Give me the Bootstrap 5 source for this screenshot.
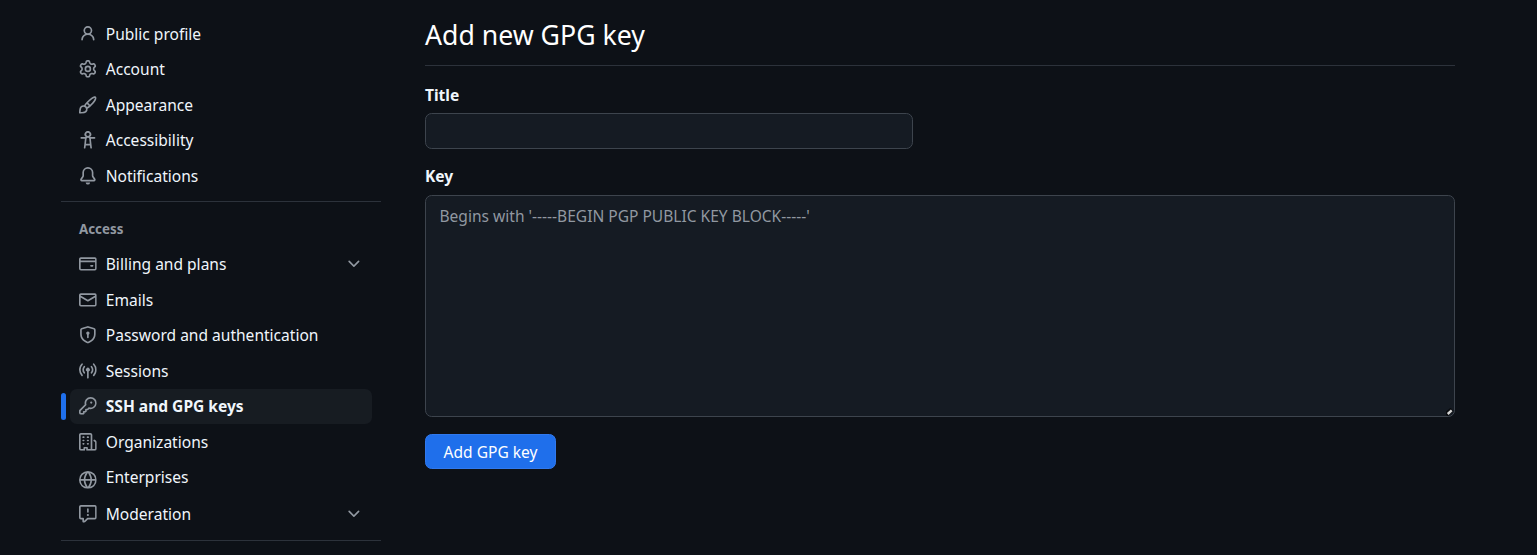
<!DOCTYPE html>
<html lang="en" data-bs-theme="dark">
<head>
<meta charset="utf-8">
<meta name="viewport" content="width=device-width, initial-scale=1">
<title>Add new GPG key</title>
<link href="https://cdn.jsdelivr.net/npm/bootstrap@5.3.0/dist/css/bootstrap.min.css" rel="stylesheet">
<style>
  body { background: #0d1117; color: #f0f6fc; font-family: "Noto Sans", sans-serif; font-size: 15.55px; line-height: 22px; height: 555px; overflow: hidden; }
  .side { width: 320px; margin-left: 61px; padding-top: 16px; }
  .side .nav-link { height: 35.5px; margin: 0 9px; padding: 0 9px; color: #f0f6fc; border-radius: 6.67px; position: relative; line-height: 22px; }
  .side .nav-link.active { background: #171c22; font-weight: 700; height: 35px; margin-bottom: .5px; }
  .side .nav-link.active::before { content: ""; position: absolute; left: -9px; top: 4px; width: 5px; height: 27px; border-radius: 5px; background: #1f6feb; }
  .oct { width: 17.77px; height: 17.77px; fill: #9198a1; flex: none; }
  .nav-link .lead-icon { margin-right: 9px; }
  .nav-link .chev { margin-left: auto; margin-right: .5px; }
  .lowered { margin-top: 5px; }
  .side .late { height: 36px; margin-top: .75px; }
  .rule { height: 1px; background: #2c323b; }
  .first-rule { margin-top: 7px; }
  .group-title { font-size: 13.33px; line-height: 20px; font-weight: 700; color: #9198a1; padding-left: 18px; margin: 17px 0 8px; }
  .form-area { width: 1030px; margin-left: 44px; padding-top: 17px; }
  .form-area h1 { font-size: 26.67px; font-weight: 400; line-height: 36px; margin: 0 0 12px; }
  .form-area .form-label { display: block; font-weight: 700; margin: 0; line-height: 22px; }
  .title-group { padding-top: 18px; }
  .title-group .form-label { padding-bottom: 7px; }
  .form-area .form-control { background: #151b23; border: 1px solid #3d444d; border-radius: 6.67px; color: #f0f6fc; font-size: 15.55px; line-height: 22px; }
  .form-area .form-control::placeholder { color: #9198a1; opacity: 1; }
  .title-input { width: 488px; height: 36px; }
  .key-input { height: 222px; padding: 9px 13.5px; resize: none; display: block; }
  .grip { position: absolute; right: 1px; bottom: 1px; width: 8px; height: 8px; }
  .btn-submit { height: 35px; width: 131px; margin-top: 17px; padding: 0; background: #1f6feb; border: 1px solid #3179ed; border-radius: 6.67px; color: #fff; font-size: 15.55px; line-height: 22px; }
</style>
</head>
<body>
<svg class="d-none" xmlns="http://www.w3.org/2000/svg">
  <symbol id="person" viewBox="0 0 16 16"><path d="M10.561 8.073a6.005 6.005 0 0 1 3.432 5.142.75.75 0 1 1-1.498.07 4.5 4.5 0 0 0-8.99 0 .75.75 0 0 1-1.498-.07 6.004 6.004 0 0 1 3.431-5.142 3.999 3.999 0 1 1 5.123 0ZM10.5 5a2.5 2.5 0 1 0-5 0 2.5 2.5 0 0 0 5 0Z"/></symbol>
  <symbol id="gear" viewBox="0 0 16 16"><path d="M8 0a8.2 8.2 0 0 1 .701.031C9.444.095 9.99.645 10.16 1.29l.288 1.107c.018.066.079.158.212.224.231.114.454.243.668.386.123.082.233.09.299.071l1.103-.303c.644-.176 1.392.021 1.82.63.27.385.506.792.704 1.218.315.675.111 1.422-.364 1.891l-.814.806c-.049.048-.098.147-.088.294.016.257.016.515 0 .772-.01.147.038.246.088.294l.814.806c.475.469.679 1.216.364 1.891a7.977 7.977 0 0 1-.704 1.217c-.428.61-1.176.807-1.82.63l-1.102-.302c-.067-.019-.177-.011-.3.071a5.909 5.909 0 0 1-.668.386c-.133.066-.194.158-.211.224l-.29 1.106c-.168.646-.715 1.196-1.458 1.26a8.006 8.006 0 0 1-1.402 0c-.743-.064-1.289-.614-1.458-1.26l-.289-1.106c-.018-.066-.079-.158-.212-.224a5.738 5.738 0 0 1-.668-.386c-.123-.082-.233-.09-.299-.071l-1.103.303c-.644.176-1.392-.021-1.82-.63a8.12 8.12 0 0 1-.704-1.218c-.315-.675-.111-1.422.363-1.891l.815-.806c.05-.048.098-.147.088-.294a6.214 6.214 0 0 1 0-.772c.01-.147-.038-.246-.088-.294l-.815-.806C.635 6.045.431 5.298.746 4.623a7.92 7.92 0 0 1 .704-1.217c.428-.61 1.176-.807 1.82-.63l1.102.302c.067.019.177.011.3-.071.214-.143.437-.272.668-.386.133-.066.194-.158.211-.224l.29-1.106C6.009.645 6.556.095 7.299.03 7.53.01 7.764 0 8 0Zm-.571 1.525c-.036.003-.108.036-.137.146l-.289 1.105c-.147.561-.549.967-.998 1.189-.173.086-.34.183-.5.29-.417.278-.97.423-1.529.27l-1.103-.303c-.109-.03-.175.016-.195.045-.22.312-.412.644-.573.99-.014.031-.021.11.059.19l.815.806c.411.406.562.957.53 1.456a4.709 4.709 0 0 0 0 .582c.032.499-.119 1.05-.53 1.456l-.815.806c-.081.08-.073.159-.059.19.162.346.353.677.573.989.02.03.085.076.195.046l1.102-.303c.56-.153 1.113-.008 1.53.27.161.107.328.204.501.29.447.222.85.629.997 1.189l.289 1.105c.029.109.101.143.137.146a6.6 6.6 0 0 0 1.142 0c.036-.003.108-.036.137-.146l.289-1.105c.147-.561.549-.967.998-1.189.173-.086.34-.183.5-.29.417-.278.97-.423 1.529-.27l1.103.303c.109.029.175-.016.195-.045.22-.313.411-.644.573-.99.014-.031.021-.11-.059-.19l-.815-.806c-.411-.406-.562-.957-.53-1.456a4.709 4.709 0 0 0 0-.582c-.032-.499.119-1.05.53-1.456l.815-.806c.081-.08.073-.159.059-.19a6.464 6.464 0 0 0-.573-.989c-.02-.03-.085-.076-.195-.046l-1.102.303c-.56.153-1.113.008-1.53-.27a4.44 4.44 0 0 0-.501-.29c-.447-.222-.85-.629-.997-1.189l-.289-1.105c-.029-.11-.101-.143-.137-.146a6.6 6.6 0 0 0-1.142 0ZM11 8a3 3 0 1 1-6 0 3 3 0 0 1 6 0ZM9.5 8a1.5 1.5 0 1 0-3.001.001A1.5 1.5 0 0 0 9.5 8Z"/></symbol>
  <symbol id="brush" viewBox="0 0 16 16"><path d="M11.134 1.535c.7-.509 1.416-.942 2.076-1.155.649-.21 1.463-.267 2.069.34.603.601.568 1.411.368 2.07-.202.668-.624 1.39-1.125 2.096-1.011 1.424-2.496 2.987-3.775 4.249-1.098 1.084-2.132 1.839-3.04 2.3a3.744 3.744 0 0 1-1.055 3.217c-.431.431-1.065.691-1.657.861-.614.177-1.294.287-1.914.357A21.151 21.151 0 0 1 .797 16H.743a.75.75 0 0 1-.743-.742v-.054a21.25 21.25 0 0 1 .13-2.284c.067-.647.187-1.287.358-1.914.17-.591.43-1.226.86-1.657a3.746 3.746 0 0 1 3.227-1.054c.466-.893 1.225-1.907 2.314-2.982 1.271-1.255 2.833-2.75 4.245-3.777ZM1.62 13.089c-.051.464-.086.929-.104 1.395.466-.018.932-.053 1.396-.104a10.511 10.511 0 0 0 1.668-.309c.526-.151.856-.325 1.011-.48a2.25 2.25 0 1 0-3.182-3.182c-.155.155-.329.485-.48 1.01a10.515 10.515 0 0 0-.309 1.67Zm10.396-10.34c-1.224.89-2.605 2.189-3.822 3.384l1.718 1.718c1.21-1.205 2.51-2.597 3.387-3.833.47-.662.78-1.227.912-1.662.134-.444.032-.551.009-.575h-.001V1.78c-.014-.014-.113-.113-.548.027-.432.14-.995.462-1.655.942Zm-4.832 7.266-.001.001a9.859 9.859 0 0 0 1.63-1.142L7.155 7.216a9.7 9.7 0 0 0-1.161 1.607c.482.302.889.71 1.19 1.192Z"/></symbol>
  <symbol id="a11y" viewBox="0 0 16 16"><path d="M9.923 5.302c.063.063.122.129.178.198H14A.75.75 0 0 1 14 7h-3.3l.578 5.163.362 2.997a.75.75 0 0 1-1.49.18L9.868 13H6.132l-.282 2.34a.75.75 0 0 1-1.49-.18l.362-2.997L5.3 7H2a.75.75 0 0 1 0-1.5h3.9a2.54 2.54 0 0 1 .176-.198 3 3 0 1 1 3.847 0ZM9.2 7.073h-.001a1.206 1.206 0 0 0-2.398 0L6.305 11.5h3.39ZM9.5 3a1.5 1.5 0 1 0-3.001.001A1.5 1.5 0 0 0 9.5 3Z"/></symbol>
  <symbol id="bell" viewBox="0 0 16 16"><path d="M8 16a2 2 0 0 0 1.985-1.75c.017-.137-.097-.25-.235-.25h-3.5c-.138 0-.252.113-.235.25A2 2 0 0 0 8 16ZM3 5a5 5 0 0 1 10 0v2.947c0 .05.015.098.042.139l1.703 2.555A1.519 1.519 0 0 1 13.482 13H2.518a1.516 1.516 0 0 1-1.263-2.36l1.703-2.554A.255.255 0 0 0 3 7.947Zm5-3.5A3.5 3.5 0 0 0 4.5 5v2.947c0 .346-.102.683-.294.97l-1.703 2.556a.017.017 0 0 0-.003.01l.001.006c0 .002.002.004.004.006l.006.004.007.001h10.964l.007-.001.006-.004.004-.006.001-.007a.017.017 0 0 0-.003-.01l-1.703-2.554a1.745 1.745 0 0 1-.294-.97V5A3.5 3.5 0 0 0 8 1.5Z"/></symbol>
  <symbol id="creditcard" viewBox="0 0 16 16"><path d="M10.75 9a.75.75 0 0 0 0 1.5h1.5a.75.75 0 0 0 0-1.5h-1.5ZM0 3.75C0 2.784.784 2 1.75 2h12.5c.966 0 1.75.784 1.75 1.75v8.5A1.75 1.75 0 0 1 14.25 14H1.75A1.75 1.75 0 0 1 0 12.25ZM14.5 6.5h-13v5.75c0 .138.112.25.25.25h12.5a.25.25 0 0 0 .25-.25Zm0-2.75a.25.25 0 0 0-.25-.25H1.75a.25.25 0 0 0-.25.25V5h13Z"/></symbol>
  <symbol id="mail" viewBox="0 0 16 16"><path d="M1.75 2h12.5c.966 0 1.75.784 1.75 1.75v8.5A1.75 1.75 0 0 1 14.25 14H1.75A1.75 1.75 0 0 1 0 12.25v-8.5C0 2.784.784 2 1.75 2ZM1.5 12.251c0 .138.112.25.25.25h12.5a.25.25 0 0 0 .25-.25V5.809L8.38 9.397a.75.75 0 0 1-.76 0L1.5 5.809v6.442Zm13-8.181v-.32a.25.25 0 0 0-.25-.25H1.75a.25.25 0 0 0-.25.25v.32L8 7.88Z"/></symbol>
  <symbol id="shield" viewBox="0 0 16 16"><path d="m8.533.133 5.25 1.68A1.75 1.75 0 0 1 15 3.48V7c0 1.566-.32 3.182-1.303 4.682-.983 1.498-2.585 2.813-5.032 3.855a1.697 1.697 0 0 1-1.33 0c-2.447-1.042-4.049-2.357-5.032-3.855C1.32 10.182 1 8.566 1 7V3.48a1.75 1.75 0 0 1 1.217-1.667l5.25-1.68a1.748 1.748 0 0 1 1.066 0Zm-.61 1.429.001.001-5.25 1.68a.251.251 0 0 0-.174.237V7c0 1.36.275 2.666 1.057 3.859.784 1.194 2.121 2.342 4.366 3.298a.196.196 0 0 0 .154 0c2.245-.957 3.582-2.103 4.366-3.297C13.225 9.666 13.5 8.358 13.5 7V3.48a.25.25 0 0 0-.174-.238l-5.25-1.68a.25.25 0 0 0-.153 0ZM9.5 6.5c0 .536-.286 1.032-.75 1.3v2.45a.75.75 0 0 1-1.5 0V7.8A1.5 1.5 0 1 1 9.5 6.5Z"/></symbol>
  <symbol id="broadcast" viewBox="0 0 16 16"><path d="M8.75 8.582v5.668a.75.75 0 0 1-1.5 0V8.582a1.75 1.75 0 1 1 1.5 0Zm3.983-7.125a.75.75 0 0 1 1.06.026A7.976 7.976 0 0 1 16 7c0 2.139-.84 4.083-2.207 5.517a.75.75 0 1 1-1.086-1.034A6.474 6.474 0 0 0 14.5 7a6.474 6.474 0 0 0-1.793-4.483.75.75 0 0 1 .026-1.06Zm-9.466 0c.3.286.312.76.026 1.06A6.474 6.474 0 0 0 1.5 7a6.47 6.47 0 0 0 1.793 4.483.75.75 0 0 1-1.086 1.034A7.973 7.973 0 0 1 0 7c0-2.139.84-4.083 2.207-5.517a.75.75 0 0 1 1.06-.026Zm8.556 2.321A4.988 4.988 0 0 1 13 7a4.988 4.988 0 0 1-1.177 3.222.75.75 0 1 1-1.146-.967A3.487 3.487 0 0 0 11.5 7c0-.86-.309-1.645-.823-2.255a.75.75 0 0 1 1.146-.967Zm-6.492.958A3.48 3.48 0 0 0 4.5 7a3.48 3.48 0 0 0 .823 2.255.75.75 0 0 1-1.146.967A4.981 4.981 0 0 1 3 7a4.982 4.982 0 0 1 1.188-3.236.75.75 0 1 1 1.143.972Z"/></symbol>
  <symbol id="keyicon" viewBox="0 0 16 16"><path d="M10.5 0a5.499 5.499 0 1 1-1.288 10.848l-.932.932a.749.749 0 0 1-.53.22H7v.75a.749.749 0 0 1-.22.53l-.5.5a.749.749 0 0 1-.53.22H5v.75a.749.749 0 0 1-.22.53l-.5.5a.749.749 0 0 1-.53.22h-2A1.75 1.75 0 0 1 0 14.25v-2c0-.199.079-.389.22-.53l4.932-4.932A5.5 5.5 0 0 1 10.5 0Zm-4 5.5c-.001.431.069.86.205 1.269a.75.75 0 0 1-.181.768L1.5 12.56v1.69c0 .138.112.25.25.25h1.69l.06-.06v-1.19a.75.75 0 0 1 .75-.75h1.19l.06-.06v-1.19a.75.75 0 0 1 .75-.75h1.19l1.023-1.025a.75.75 0 0 1 .768-.18A4 4 0 1 0 6.5 5.5ZM11 6a1 1 0 1 1 0-2 1 1 0 0 1 0 2Z"/></symbol>
  <symbol id="org" viewBox="0 0 16 16"><path d="M1.75 16A1.75 1.75 0 0 1 0 14.25V1.75C0 .784.784 0 1.75 0h8.5C11.216 0 12 .784 12 1.75v12.5c0 .085-.006.168-.018.25h2.268a.25.25 0 0 0 .25-.25V8.285a.25.25 0 0 0-.111-.208l-1.055-.703a.749.749 0 1 1 .832-1.248l1.055.703c.487.325.779.871.779 1.456v5.965A1.75 1.75 0 0 1 14.25 16h-3.5a.766.766 0 0 1-.197-.026c-.099.017-.2.026-.303.026h-3a.75.75 0 0 1-.75-.75V14h-1v1.25a.75.75 0 0 1-.75.75Zm-.25-1.75c0 .138.112.25.25.25H4v-1.25a.75.75 0 0 1 .75-.75h2.5a.75.75 0 0 1 .75.75v1.25h2.25a.25.25 0 0 0 .25-.25V1.75a.25.25 0 0 0-.25-.25h-8.5a.25.25 0 0 0-.25.25ZM3.75 6h.5a.75.75 0 0 1 0 1.5h-.5a.75.75 0 0 1 0-1.5ZM3 3.75A.75.75 0 0 1 3.75 3h.5a.75.75 0 0 1 0 1.5h-.5A.75.75 0 0 1 3 3.75Zm4 3A.75.75 0 0 1 7.75 6h.5a.75.75 0 0 1 0 1.5h-.5A.75.75 0 0 1 7 6.75ZM7.75 3h.5a.75.75 0 0 1 0 1.5h-.5a.75.75 0 0 1 0-1.5ZM3 9.75A.75.75 0 0 1 3.75 9h.5a.75.75 0 0 1 0 1.5h-.5A.75.75 0 0 1 3 9.75ZM7.75 9h.5a.75.75 0 0 1 0 1.5h-.5a.75.75 0 0 1 0-1.5Z"/></symbol>
  <symbol id="globe" viewBox="0 0 16 16"><path d="M8 0a8 8 0 1 1 0 16A8 8 0 0 1 8 0ZM5.78 8.75a9.64 9.64 0 0 0 1.363 4.177c.255.426.542.832.857 1.215.245-.296.551-.705.857-1.215A9.64 9.64 0 0 0 10.22 8.75Zm4.44-1.5a9.64 9.64 0 0 0-1.363-4.177c-.307-.51-.612-.919-.857-1.215a9.927 9.927 0 0 0-.857 1.215A9.64 9.64 0 0 0 5.78 7.25Zm-5.944 1.5H1.543a6.507 6.507 0 0 0 4.666 5.5c-.123-.181-.24-.365-.352-.552-.715-1.192-1.437-2.874-1.581-4.948Zm-2.733-1.5h2.733c.144-2.074.866-3.756 1.58-4.948.12-.197.237-.381.353-.552a6.507 6.507 0 0 0-4.666 5.5Zm10.181 1.5c-.144 2.074-.866 3.756-1.58 4.948-.12.197-.237.381-.353.552a6.507 6.507 0 0 0 4.666-5.5Zm2.733-1.5a6.507 6.507 0 0 0-4.666-5.5c.123.181.24.365.353.552.714 1.192 1.436 2.874 1.58 4.948Z"/></symbol>
  <symbol id="report" viewBox="0 0 16 16"><path d="M0 1.75C0 .784.784 0 1.75 0h12.5C15.216 0 16 .784 16 1.75v9.5A1.75 1.75 0 0 1 14.25 13H8.06l-2.573 2.573A1.458 1.458 0 0 1 3 14.543V13H1.75A1.75 1.75 0 0 1 0 11.25Zm1.75-.25a.25.25 0 0 0-.25.25v9.5c0 .138.112.25.25.25h2a.75.75 0 0 1 .75.75v2.19l2.72-2.72a.749.749 0 0 1 .53-.22h6.5a.25.25 0 0 0 .25-.25v-9.5a.25.25 0 0 0-.25-.25Zm7 2.25v2.5a.75.75 0 0 1-1.5 0v-2.5a.75.75 0 0 1 1.5 0ZM9 9a1 1 0 1 1-2 0 1 1 0 0 1 2 0Z"/></symbol>
  <symbol id="chevron" viewBox="0 0 16 16"><path d="M12.78 5.22a.749.749 0 0 1 0 1.06l-4.25 4.25a.749.749 0 0 1-1.06 0L3.22 6.28a.749.749 0 1 1 1.06-1.06L8 8.939l3.72-3.719a.749.749 0 0 1 1.06 0Z"/></symbol>
</svg>

<div class="d-flex">
  <aside class="side flex-shrink-0">
    <nav class="nav flex-column flex-nowrap">
      <a class="nav-link d-flex align-items-center" href="#"><svg class="oct lead-icon"><use href="#person"/></svg>Public profile</a>
      <a class="nav-link d-flex align-items-center" href="#"><svg class="oct lead-icon"><use href="#gear"/></svg>Account</a>
      <a class="nav-link d-flex align-items-center" href="#"><svg class="oct lead-icon"><use href="#brush"/></svg>Appearance</a>
      <a class="nav-link d-flex align-items-center" href="#"><svg class="oct lead-icon"><use href="#a11y"/></svg>Accessibility</a>
      <a class="nav-link d-flex align-items-center" href="#"><svg class="oct lead-icon"><use href="#bell"/></svg>Notifications</a>
    </nav>
    <div class="rule first-rule"></div>
    <h2 class="group-title">Access</h2>
    <nav class="nav flex-column flex-nowrap">
      <a class="nav-link d-flex align-items-center" href="#"><svg class="oct lead-icon"><use href="#creditcard"/></svg>Billing and plans<svg class="oct chev"><use href="#chevron"/></svg></a>
      <a class="nav-link d-flex align-items-center" href="#"><svg class="oct lead-icon"><use href="#mail"/></svg>Emails</a>
      <a class="nav-link d-flex align-items-center" href="#"><svg class="oct lead-icon"><use href="#shield"/></svg>Password and authentication</a>
      <a class="nav-link d-flex align-items-center" href="#"><svg class="oct lead-icon"><use href="#broadcast"/></svg>Sessions</a>
      <a class="nav-link active d-flex align-items-center" href="#" aria-current="page"><svg class="oct lead-icon"><use href="#keyicon"/></svg>SSH and GPG keys</a>
      <a class="nav-link d-flex align-items-center" href="#"><svg class="oct lead-icon"><use href="#org"/></svg>Organizations</a>
      <a class="nav-link d-flex align-items-center" href="#"><svg class="oct lead-icon lowered"><use href="#globe"/></svg>Enterprises</a>
      <a class="nav-link late d-flex align-items-center" href="#"><svg class="oct lead-icon"><use href="#report"/></svg>Moderation<svg class="oct chev"><use href="#chevron"/></svg></a>
    </nav>
    <div class="rule mt-2"></div>
  </aside>

  <main class="form-area flex-shrink-0">
    <h1>Add new GPG key</h1>
    <div class="rule"></div>
    <form>
      <div class="title-group">
        <label class="form-label" for="title">Title</label>
        <input class="form-control title-input" id="title" type="text">
      </div>
      <div class="pt-3">
        <label class="form-label pb-2" for="key">Key</label>
        <div class="position-relative">
          <textarea class="form-control key-input" id="key" placeholder="Begins with '-----BEGIN PGP PUBLIC KEY BLOCK-----'"></textarea>
          <svg class="grip" viewBox="0 0 8 8"><path d="M0 6.5 6 1.5" stroke="#080a0d" stroke-width="4.5"/><path d="M1.7 6 5.7 2.4" stroke="#d5d5d5" stroke-width="2.4"/></svg>
        </div>
      </div>
      <button class="btn btn-submit" type="button">Add GPG key</button>
    </form>
  </main>
</div>
<script src="https://cdn.jsdelivr.net/npm/bootstrap@5.3.0/dist/js/bootstrap.bundle.min.js"></script>
</body>
</html>
